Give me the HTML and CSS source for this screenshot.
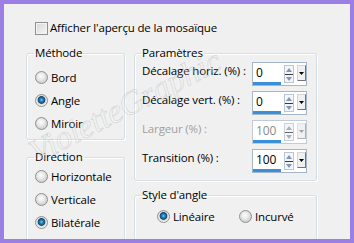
FILE: index.html
```html
<!DOCTYPE html>
<html lang="fr">
  <head>
    <meta charset="UTF-8" />
    <title>Mosaïque</title>
    <link rel="stylesheet" href="styles.css">
  </head>
  <body>
    <div class="dialog">
      <label class="preview-toggle">
        <span class="check"></span>Afficher l'aperçu de la mosaïque
      </label>
      <div class="panes">
        <div class="col-left">
          <fieldset class="group group-method">
            <legend>Méthode</legend>
            <div class="radio-row"><span class="radio"></span>Bord</div>
            <div class="radio-row"><span class="radio on"></span>Angle</div>
            <div class="radio-row"><span class="radio"></span>Miroir</div>
          </fieldset>
          <fieldset class="group group-direction">
            <legend>Direction</legend>
            <div class="radio-row"><span class="radio"></span>Horizontale</div>
            <div class="radio-row"><span class="radio"></span>Verticale</div>
            <div class="radio-row"><span class="radio on"></span>Bilatérale</div>
          </fieldset>
        </div>
        <div class="col-right">
          <fieldset class="group group-params">
            <legend>Paramètres</legend>
            <div class="field-row">
              <span class="field-label">Décalage horiz. (%) :</span>
              <div class="spin">
                <span class="spin-value">0</span>
                <svg class="spin-arrows" width="10" height="18" viewBox="0 0 10 18">
                  <rect x="0.5" y="0.5" width="9" height="17" fill="#f3f5f8" stroke="#bcc6d2" />
                  <path d="M2 7 L5 3 L8 7 Z" fill="#8097b1" />
                  <path d="M1 9.5 H9" stroke="#3a3a3a" />
                  <path d="M2 12 L5 16 L8 12 Z" fill="#8097b1" />
                </svg>
                <span class="spin-drop">
                  <svg width="5" height="3" viewBox="0 0 5 3"><path d="M0 0 H5 L2.5 3 Z" fill="#000" /></svg>
                </span>
              </div>
            </div>
            <div class="field-row">
              <span class="field-label">Décalage vert. (%) :</span>
              <div class="spin">
                <span class="spin-value">0</span>
                <svg class="spin-arrows" width="10" height="18" viewBox="0 0 10 18">
                  <rect x="0.5" y="0.5" width="9" height="17" fill="#f3f5f8" stroke="#bcc6d2" />
                  <path d="M2 7 L5 3 L8 7 Z" fill="#8097b1" />
                  <path d="M1 9.5 H9" stroke="#3a3a3a" />
                  <path d="M2 12 L5 16 L8 12 Z" fill="#8097b1" />
                </svg>
                <span class="spin-drop">
                  <svg width="5" height="3" viewBox="0 0 5 3"><path d="M0 0 H5 L2.5 3 Z" fill="#000" /></svg>
                </span>
              </div>
            </div>
            <div class="field-row disabled">
              <span class="field-label">Largeur (%) :</span>
              <div class="spin">
                <span class="spin-value">100</span>
                <svg class="spin-arrows" width="10" height="18" viewBox="0 0 10 18">
                  <rect x="0.5" y="0.5" width="9" height="17" fill="#f3f5f8" stroke="#c8d0da" />
                  <path d="M2 7 L5 3 L8 7 Z" fill="#a3b2c4" />
                  <path d="M1 9.5 H9" stroke="#6a6a6a" />
                  <path d="M2 12 L5 16 L8 12 Z" fill="#a3b2c4" />
                </svg>
                <span class="spin-drop">
                  <svg width="5" height="3" viewBox="0 0 5 3"><path d="M0 0 H5 L2.5 3 Z" fill="#a0a0a0" /></svg>
                </span>
              </div>
            </div>
            <div class="field-row">
              <span class="field-label">Transition (%) :</span>
              <div class="spin">
                <span class="spin-value">100</span>
                <svg class="spin-arrows" width="10" height="18" viewBox="0 0 10 18">
                  <rect x="0.5" y="0.5" width="9" height="17" fill="#f3f5f8" stroke="#bcc6d2" />
                  <path d="M2 7 L5 3 L8 7 Z" fill="#8097b1" />
                  <path d="M1 9.5 H9" stroke="#3a3a3a" />
                  <path d="M2 12 L5 16 L8 12 Z" fill="#8097b1" />
                </svg>
                <span class="spin-drop">
                  <svg width="5" height="3" viewBox="0 0 5 3"><path d="M0 0 H5 L2.5 3 Z" fill="#000" /></svg>
                </span>
              </div>
            </div>
          </fieldset>
          <fieldset class="group group-style">
            <legend>Style d'angle</legend>
            <div class="style-options">
              <div class="radio-row option-first"><span class="radio on"></span>Linéaire</div>
              <div class="radio-row"><span class="radio"></span>Incurvé</div>
            </div>
          </fieldset>
        </div>
      </div>
      <div class="watermark">VioletteGraphic</div>
    </div>
  </body>
</html>
```

FILE: styles.css
```css
* {
  box-sizing: border-box;
}
body {
  margin: 0;
  font-family: "Open Sans", "Noto Sans", sans-serif;
  font-size: 11.5px;
  letter-spacing: -0.15px;
  color: #000;
}
.dialog {
  position: relative;
  width: 354px;
  height: 243px;
  border: 4px solid #9b7fe4;
  background: #f0f0f0;
  padding: 16px 0 0 22px;
  overflow: hidden;
}
.preview-toggle {
  display: flex;
  align-items: center;
  height: 16px;
  padding-left: 9px;
  line-height: 16px;
}
.check {
  width: 13px;
  height: 13px;
  margin-right: 2px;
  border: 1px solid #8e8f8f;
  background: linear-gradient(135deg, #d6d6d6, #f7f7f7);
  box-shadow: inset 0 0 0 1px #f4f4f4;
  flex: none;
}
.panes {
  display: flex;
  gap: 9px;
  margin-top: 9px;
}
.col-left {
  display: flex;
  flex-direction: column;
  gap: 9px;
  width: 99px;
}
.col-right {
  display: flex;
  flex-direction: column;
  gap: 6px;
  width: 183px;
}
.group {
  margin: 0;
  border: 1px solid #d5dfe5;
  border-radius: 3px;
  box-shadow: inset 1px 1px 0 #fff, 1px 1px 0 #fff;
  padding: 0 8px 4px 8px;
}
.group legend {
  margin-left: -1px;
  padding: 0 1px;
  line-height: 16px;
}
.group-method {
  padding-top: 5px;
}
.group-direction {
  padding-bottom: 12px;
}
.group-params,
.group-style {
  padding-left: 7px;
}
.group-params {
  display: flex;
  flex-direction: column;
  gap: 5px;
  padding-top: 1px;
  padding-bottom: 7px;
}
.group-style {
  padding-top: 2px;
  padding-bottom: 12px;
}
.radio-row {
  display: flex;
  align-items: center;
  height: 23px;
  white-space: nowrap;
}
.radio {
  width: 13px;
  height: 13px;
  margin-right: 3px;
  border-radius: 50%;
  border: 1px solid #8f9090;
  background: radial-gradient(circle at 45% 40%, #fdfdfd 0, #ececec 3px, #d2d2d2 6px);
  flex: none;
}
.radio.on {
  background: radial-gradient(circle at 50% 45%, #6fd0f4 0, #2b86bf 1.5px, #15466f 3.5px, #dadada 4.2px, #f4f4f4 6px);
}
.field-row {
  display: flex;
  align-items: flex-start;
  height: 24px;
}
.field-label {
  width: 110px;
  padding-top: 1px;
  line-height: 16px;
  white-space: nowrap;
}
.spin {
  display: flex;
  align-items: flex-start;
  width: 55px;
  height: 24px;
  border: 1px solid #a5b6c8;
  background: #fff;
}
.spin-value {
  width: 28px;
  height: 22px;
  padding-left: 3px;
  line-height: 19px;
  font-size: 12px;
  border-bottom: 3px solid #3b8fd9;
}
.spin-arrows {
  margin: 2px 0 0 3px;
  flex: none;
}
.spin-drop {
  display: flex;
  align-items: center;
  justify-content: center;
  width: 9px;
  height: 16px;
  margin: 2px 0 0 3px;
  border: 1px solid;
  border-color: #d4d4d4 #767676 #767676 #d4d4d4;
  background: #f0f0f0;
}
.disabled .field-label {
  color: #a0a0a0;
}
.disabled .spin {
  border-color: #c3ccd6;
}
.disabled .spin-value {
  color: #8a8a8a;
}
.disabled .spin-drop {
  border-color: #e0e0e0 #b0b0b0 #b0b0b0 #e0e0e0;
}
.style-options {
  display: flex;
  padding-left: 15px;
}
.option-first {
  width: 82px;
}
.watermark {
  position: absolute;
  left: 11px;
  top: 83px;
  width: 220px;
  text-align: center;
  font-family: "Liberation Serif", serif;
  font-style: italic;
  font-size: 33px;
  letter-spacing: 0;
  line-height: 38px;
  color: rgba(255, 255, 255, 0.2);
  -webkit-text-stroke: 0.7px rgba(160, 160, 160, 0.35);
  transform: rotate(-27deg);
  pointer-events: none;
}
```
